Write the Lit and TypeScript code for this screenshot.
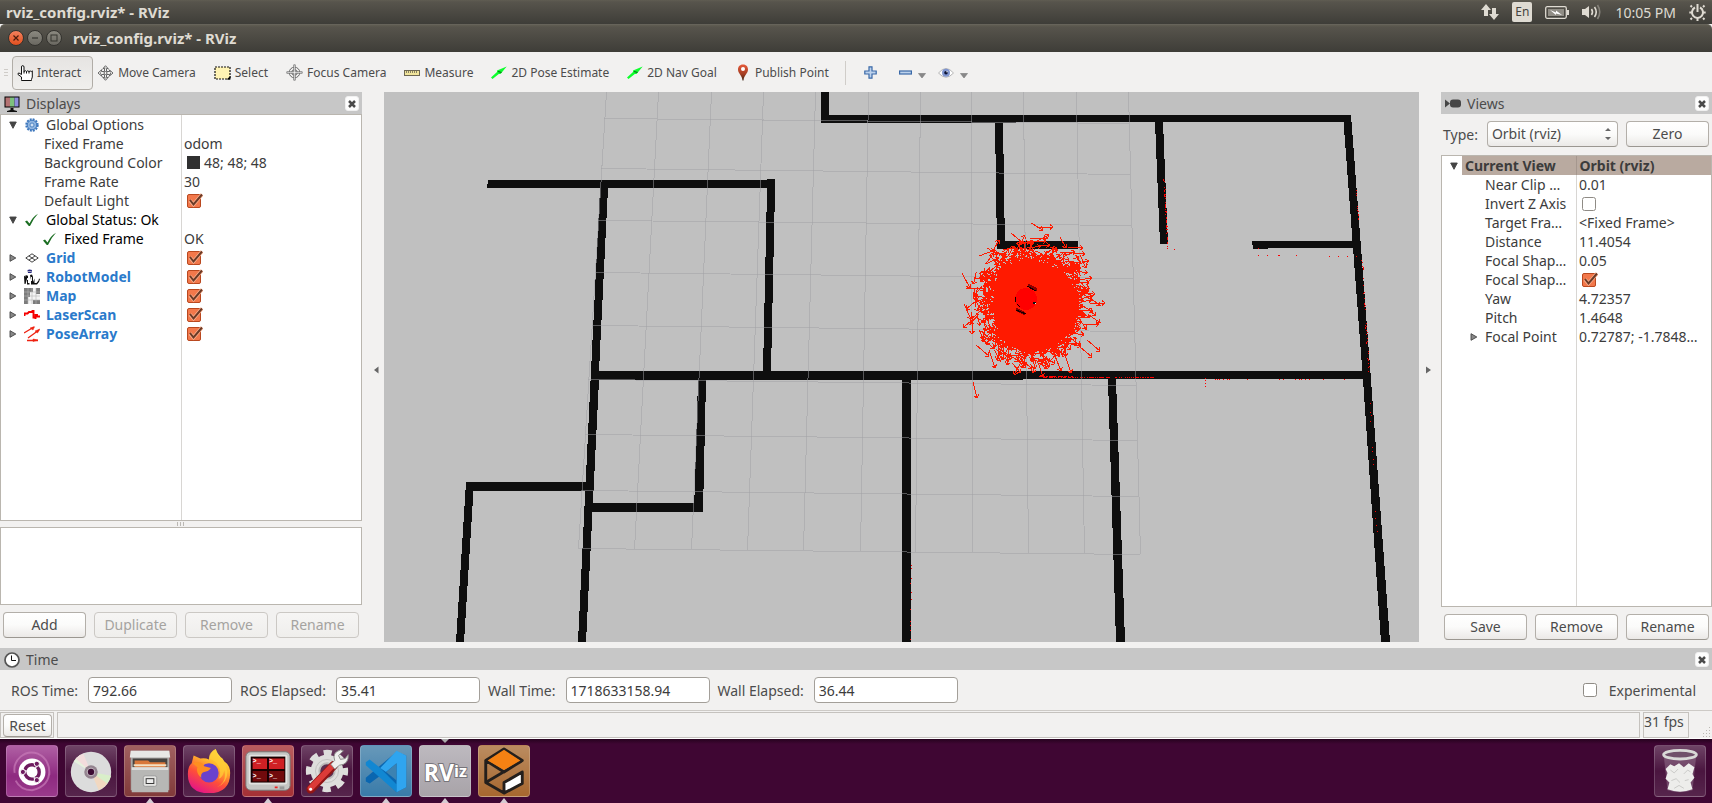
import { LitElement, html, svg, css, nothing } from "lit";
import { customElement, property } from "lit/decorators.js";

const FONT = css`"Noto Sans", "Open Sans", sans-serif`;

const controls = css`
  * { box-sizing: border-box; }
  svg { display: block; flex: none; }
  button, input, select { font: inherit; color: inherit; margin: 0; }
  .btn {
    height: 26px; padding: 0 6px; border: 1px solid #b3afa9; border-bottom-color: #9b9791;
    border-radius: 4px; background: linear-gradient(#ffffff, #fbfbfa 50%, #ebe9e7);
    font-size: 14px; line-height: 18px; color: #4c4c4c;
  }
  .btn:disabled { color: #a5a3a0; border-color: #cbc8c4; background: linear-gradient(#f6f5f4, #efeeec); }
  input[type="checkbox"] {
    appearance: none; display: block; width: 16px; height: 16px;
    background: no-repeat url("data:image/svg+xml,%3Csvg xmlns='http://www.w3.org/2000/svg' width='16' height='16'%3E%3Crect x='.5' y='1.5' width='13' height='13' rx='2' fill='white' stroke='%238f8b85'/%3E%3C/svg%3E");
  }
  input[type="checkbox"]:checked {
    background-image: url("data:image/svg+xml,%3Csvg xmlns='http://www.w3.org/2000/svg' width='16' height='16'%3E%3Crect x='.5' y='1.5' width='13' height='13' rx='1.5' fill='%23f2784b' stroke='%23b9481f'/%3E%3Cpath d='M3 7.5L6.5 11.500L15 1.500' fill='none' stroke='%23f9b08f' stroke-width='3.500'/%3E%3Cpath d='M3 7L6.500 11.500L15 1.500' fill='none' stroke='%236b3a26' stroke-width='2'/%3E%3C/svg%3E");
  }
`;

const icons: Record<string, unknown> = {
  interact: html`<svg width="16" height="16" viewBox="0 0 16 16"><path d="M4.500 14.500V12L1 9.500Q.5 8 2 8L4.500 9.500V2Q4.500.6 5.700.6T7 2V6.500Q8.300 4.800 9.500 6.500Q10.800 5 12 6.600Q13.300 5.400 14.300 6.600L15.300 5.800V12L14.500 14.500V15.500H4.500Z" fill="#fff" stroke="#111"/><path d="M9.500 6.500V8.500M12 6.500V8.500M7 6V8.500" stroke="#111"/></svg>`,
  move: html`<svg width="17" height="16" viewBox="0 0 17 16" fill="#f4f3f1" stroke="#666"><path d="M8.500.7L11 3.500H9.500V6.500H12.500V5L16 8L12.500 11V9.500H9.500V12.500H11L8.500 15.300L6 12.500H7.500V9.500H4.500V11L1 8L4.500 5V6.500H7.500V3.500H6Z"/><circle cx="8.500" cy="8" r="5" fill="none" stroke-dasharray="2 1.500"/><circle cx="8.500" cy="8" r="1.500"/></svg>`,
  select: html`<svg width="17" height="16" viewBox="0 0 17 16"><rect x="1" y="2" width="15" height="12" fill="#fff3b4" stroke="#111" stroke-width="1.200" stroke-dasharray="2 1"/><path d="M16.500 11V14.500H12.500Z" fill="#000"/></svg>`,
  focus: html`<svg width="17" height="17" viewBox="0 0 17 17" fill="none" stroke="#666"><circle cx="8.500" cy="8.500" r="5.300"/><circle cx="8.500" cy="8.500" r="2.800"/><path d="M7.700.8H9.300V7.700H16.200V9.300H9.300V16.200H7.700V9.300H.8V7.700H7.700Z" fill="#eee" stroke-width=".7"/></svg>`,
  measure: html`<svg width="16" height="16" viewBox="0 0 16 16"><rect x=".5" y="5.500" width="15" height="5" fill="#f0e49b" stroke="#6d6752"/><path d="M2.500 6V8M4.500 6V8M6.500 6V8M8.500 6V8M10.500 6V8M12.500 6V8" stroke="#6d6752" stroke-width=".8"/></svg>`,
  arrow: html`<svg width="16" height="16" viewBox="0 0 16 16"><path d="M0 12.500L6 7L6 5.500L15.700 1.500L9.500 9H7.800L1.500 14Z" fill="#0eff2e"/><path d="M7 6.500L10.500 7.500" stroke="#0a6618" stroke-width="1.300"/></svg>`,
  pin: html`<svg width="16" height="17" viewBox="0 0 16 17"><defs><linearGradient id="pg" x2="0" y2="1"><stop stop-color="#e65a3b"/><stop offset=".6" stop-color="#a43d22"/><stop offset="1" stop-color="#3d2312"/></linearGradient></defs><path d="M8 .5C4.500.5 3 3 3 5.500C3 9.500 7 11 7.500 16.500H8.500C9 11 13 9.500 13 5.500C13 3 11.500.5 8 .5Z" fill="url(#pg)"/><circle cx="8" cy="5" r="2" fill="#fff"/></svg>`,
  plus: html`<svg width="13" height="13" viewBox="0 0 13 13"><path d="M5 .8H8V5H12.200V8H8V12.200H5V8H.8V5H5Z" fill="#bdd2ec" stroke="#3a69a8" stroke-width="1.200"/></svg>`,
  minus: html`<svg width="13" height="13" viewBox="0 0 13 13"><rect x=".6" y="5" width="11.800" height="3" fill="#bdd2ec" stroke="#3a69a8" stroke-width="1.200"/></svg>`,
  eye: html`<svg width="16" height="12" viewBox="0 0 16 12"><path d="M.5 6Q8-3 15.500 6Q8 14.500.5 6Z" fill="#fff" stroke="#b5b5b5"/><circle cx="8" cy="5.800" r="4" fill="#7f95cf"/><circle cx="8" cy="5.800" r="1.800" fill="#0c1233"/><circle cx="9" cy="4.800" r=".7" fill="#fff"/></svg>`,
  caret: html`<svg width="8" height="13" viewBox="0 0 8 13"><path d="M.5 7.500H7.500L4 12Z" fill="#888" stroke="#777" stroke-width=".6"/></svg>`,
  monitor: html`<svg width="16" height="16" viewBox="0 0 16 16"><rect x=".5" y=".5" width="15" height="11" fill="#000"/><path d="M1.500 1.500H6V10.500H1.500Z" fill="#b47272"/><path d="M6 1.500H10.500V10.500H6Z" fill="#7dc07d"/><path d="M10.500 1.500H14.500V10.500H10.500Z" fill="#8d8ddb"/><path d="M6.500 12H9.500V14L13 15V16H3V15L6.500 14Z" fill="#111"/></svg>`,
  camera: html`<svg width="16" height="9" viewBox="0 0 16 9" fill="#454545"><path d="M0 .5L5 4.500L0 8.500Z"/><rect x="5" y=".5" width="11" height="8" rx="3"/></svg>`,
  clock: html`<svg width="16" height="16" viewBox="0 0 16 16"><circle cx="8" cy="8" r="7" fill="#fff" stroke="#555" stroke-width="1.700"/><path d="M7.500 3.500V8.500H12" fill="none" stroke="#111"/></svg>`,
  gear: html`<svg width="14" height="14" viewBox="0 0 14 14"><circle cx="7" cy="7" r="5.600" fill="none" stroke="#3d77bd" stroke-width="2.200" stroke-dasharray="1.900 1.030"/><circle cx="7" cy="7" r="4.800" fill="#8fb4df" stroke="#3d77bd"/><circle cx="7" cy="7" r="2" fill="#cfe0f3" stroke="#3d77bd" stroke-width=".8"/></svg>`,
  tick: html`<svg width="14" height="14" viewBox="0 0 14 14"><path d="M0 8.500L2 7.500L4.500 10.500Q7.500 4 13 .8Q8 6 5 13H3.800Z" fill="#1b6e22"/></svg>`,
  grid: html`<svg width="14" height="10" viewBox="0 0 14 10" fill="none" stroke="#444"><path d="M.8 5L7 .8L13.200 5L7 9.200ZM3.900 2.900L10.100 7.100M10.100 2.900L3.900 7.100"/></svg>`,
  robot: html`<svg width="16" height="16" viewBox="0 0 16 16" fill="#111"><path d="M3.500 1Q5.500 0 8 1L7.500 4H4Z" fill="#25257e"/><path d="M4 2H7.500V3H4Z" fill="#aab"/><path d="M0 7.500L1.500 6V8L2.500 6L4 7V14H5.500V15.500H3V10L1.500 15H.5Z"/><path d="M6 6L8 5.500L9 8V13L10.500 9.500V14H12.500L14.500 11.500L15 9.500L16 10L15 13L13 15.500H7V11Z"/><path d="M7.500 8V12M3.500 9V11" stroke="#eee"/></svg>`,
  map: html`<svg width="16" height="16" viewBox="0 0 16 16"><path d="M0 0H16V16H0Z" fill="#f4f4f4"/><path d="M0 0H9V4H6V9H4V16H0ZM12 0H16V6H12ZM9 12H16V16H9Z" fill="#7c7c7c"/><path d="M4 0V16M8 0V16M12 0V16M0 4H16M0 8H16M0 12H16" stroke="#b5b5b5" stroke-width=".6"/></svg>`,
  laser: html`<svg width="16" height="12" viewBox="0 0 16 12"><path d="M.5 7V4.500H3.500L5 3H8.500V2H9.500V8.500H11.500V10V6H13V7.500H16" fill="none" stroke="#f50000" stroke-width="1.900"/></svg>`,
  poses: html`<svg width="16" height="16" viewBox="0 0 16 16" stroke="#ee2211" fill="none"><path d="M0 7L10 1M4 12L15 4M3 14.500H14" stroke-width="1.300"/><path d="M6 2L10.500.7L9 4ZM11 5L16 3L13.500 7ZM9 13L14 14L9 15.500Z" fill="#ee2211" stroke-width=".5"/></svg>`,
};

const tri = (open: boolean) => html`<svg width="8" height="8" viewBox="0 0 8 8"><path d=${open ? "M.7 1H7.300L4 7.300Z" : "M1 .7V7.300L6.800 4Z"} fill=${open ? "#444" : "#888"} stroke="#444" stroke-width=".9"/></svg>`;

interface Row {
  name: string;
  value?: string;
  level?: number;
  icon?: string;
  open?: boolean;
  check?: boolean;
  tone?: string;
  swatch?: boolean;
}

@customElement("property-tree")
class PropertyTree extends LitElement {
  @property({ attribute: false }) rows: Row[] = [];
  @property() label = "";

  static styles = [controls, css`
    :host { display: block; border: 1px solid #bab6af; overflow: hidden; font: 14px/19px ${FONT}; color: #3c3c3c;
      background: linear-gradient(#d8d6d3, #d8d6d3) var(--split) 0 / 1px 100% no-repeat #fff; }
    table { width: 100%; table-layout: fixed; border-collapse: collapse; }
    col.name { width: var(--split); }
    th, td { height: 19px; padding: 0; font-weight: 400; text-align: left; }
    .cell { display: flex; align-items: center; height: 19px; white-space: nowrap; }
    .text { padding-left: 1px; }
    .toggle { width: 24px; padding-left: 8px; flex: none; }
    .glyph { width: 20px; margin: 0 3px 0 -3px; flex: none; display: flex; align-items: center; justify-content: center; }
    .l1 { padding-left: 18px; }
    .value { padding-left: 3px; }
    .value input { margin-left: 3px; }
    .swatch { width: 13px; height: 13px; margin: 0 4px 0 3px; background: #303030; }
    .black { color: #000; }
    .link { color: #2a7acb; font-weight: 700; }
    .current, .current + td { font-weight: 700; }
    .current .text { background: #b9aaa0; flex: 1; padding-left: 3px; }
    .current .toggle { width: 20px; }
    .current + td { background: #b9aaa0; border-left: 1px solid #a5978e; }
    .view.l1 { padding-left: 20px; }
    .view.l1 .toggle { width: 22px; }
  `];

  render() {
    return html`<table aria-label=${this.label}>
      <colgroup><col class="name"><col></colgroup>
      <tbody>${this.rows.map((r, i) => html`<tr>
        <th scope="row" class=${r.tone ?? ""}>
          <div class="cell l${r.level ?? 0} ${this.label === "View properties" ? "view" : ""}">
            <span class="toggle">${r.open === undefined ? nothing : tri(r.open)}</span>
            ${r.icon ? html`<span class="glyph">${icons[r.icon]}</span>` : nothing}
            <span class="text" id="p${i}">${r.name}</span>
          </div>
        </th>
        <td><div class="cell value">
          ${r.check === undefined ? nothing : html`<input type="checkbox" aria-labelledby="p${i}" .checked=${r.check}>`}
          ${r.swatch ? html`<span class="swatch"></span>` : nothing}
          ${r.value ? html`<span>${r.value}</span>` : nothing}
        </div></td>
      </tr>`)}</tbody>
    </table>`;
  }
}

@customElement("dock-title")
class DockTitle extends LitElement {
  @property() icon = "";
  @property() label = "";
  static styles = [controls, css`
    :host { display: flex; align-items: center; gap: 6px; height: 22px; flex: none; padding: 1px 3px 0 4px; background: #c7c7c7; font: 14px/21px ${FONT}; color: #4c4c4c; }
    h2 { margin: 0; font: inherit; flex: 1; }
    button { width: 14px; height: 15px; padding: 0; border: 1px solid #f0f0f0; border-radius: 3px; background: #fdfdfd; display: grid; place-items: center; }
  `];
  render() {
    return html`${icons[this.icon]}<h2>${this.label}</h2>
      <button aria-label="Close ${this.label}"><svg width="8" height="8" viewBox="0 0 8 8"><path d="M1 1L7 7M7 1L1 7" stroke="#4a4a4a" stroke-width="2.500"/></svg></button>`;
  }
}

const WALLS = [
  "488,180 775,180 775,188 487,188", "767,179 775,179 775,194 767,194",
  "600,188 608,188 599,371 599,380 586,642 578,642 591,371",
  "767,190 775,190 771,371 763,371",
  "591,371 1023,371 1363,371 1363,379 1023,379 1023,380 591,380",
  "698,380 706,380 703,512 694,512", "590,503 703,503 703,512 590,512",
  "466,482 593,482 593,491 466,491", "466,482 474,482 464,642 456,642",
  "902,380 911,380 911,642 902,642", "821,92 829,92 829,122 821,122",
  "821,115 1351,115 1351,122 1016,122 1016,123 821,123",
  "995,122 1003,122 1005,249 997,249", "997,241 1078,241 1078,249 997,249",
  "1155,122 1163,122 1168,244 1160,244",
  "1252,241 1356,241 1356,248 1268,248 1268,249 1253,249",
  "1343,115 1351,115 1371,380 1390,642 1381,642 1363,380",
  "1108,379 1116,379 1125,642 1116,642",
];

const GRID = [
  [606, 92, 578, 548], [658, 92, 634, 549], [711, 92, 691, 549], [763, 92, 747, 550],
  [815, 92, 803, 550], [868, 92, 860, 551], [920, 92, 915, 552], [971, 92, 972, 552],
  [1023, 92, 1028, 553], [1076, 92, 1084, 553], [1128, 92, 1140, 554],
  [604, 118, 1129, 123], [601, 168, 1130, 174], [598, 220, 1131, 225], [595, 272, 1133, 278],
  [592, 325, 1134, 331], [588, 379, 1136, 385], [585, 434, 1137, 440], [581, 490, 1138, 496],
  [578, 548, 1140, 554],
];

const STRAYS = [
  [962, 273, 970, 288], [966, 288, 986, 288], [964, 304, 971, 319], [972, 316, 972, 334],
  [976, 345, 989, 356], [989, 350, 995, 368], [1012, 363, 1021, 373], [1055, 356, 1061, 371],
  [1065, 355, 1071, 373], [973, 382, 977, 398], [1073, 259, 1079, 257], [1080, 255, 1086, 268],
  [1031, 223, 1043, 230], [1037, 227, 1053, 227], [1090, 303, 1105, 303], [1087, 340, 1100, 351],
  [1080, 347, 1092, 357], [1060, 252, 1085, 254], [1011, 233, 1023, 243], [979, 256, 995, 250],
  [1083, 325, 1099, 324], [1078, 280, 1092, 278], [1030, 238, 1047, 238], [1060, 237, 1066, 248],
  [1068, 247, 1083, 248], [1088, 309, 1096, 316], [987, 248, 997, 254], [1020, 243, 1046, 241],
];

function seeded(seed: number) {
  return () => {
    seed = (seed * 1664525 + 1013904223) % 4294967296;
    return seed / 4294967296;
  };
}

function arrow(x: number, y: number, a: number, len: number) {
  const tx = x + Math.cos(a) * len, ty = y + Math.sin(a) * len;
  const head = (d: number) => `M${tx.toFixed(1)} ${ty.toFixed(1)}L${(tx - Math.cos(a + d) * 4).toFixed(1)} ${(ty - Math.sin(a + d) * 4).toFixed(1)}`;
  return `M${x.toFixed(1)} ${y.toFixed(1)}L${tx.toFixed(1)} ${ty.toFixed(1)}${head(0.7)}${head(-0.7)}`;
}

function poseCloud() {
  const rnd = seeded(42);
  let d = "";
  for (let i = 0; i < 950; i++) {
    const t = rnd() * Math.PI * 2;
    const spread = (rnd() + rnd() + rnd() - 1.5) * 19;
    const r = 38 + spread;
    const a = 0.5 + (rnd() + rnd() - 1) * 2.4;
    d += arrow(1028 + Math.cos(t) * r, 302 + Math.sin(t) * r * 1.070, a, 13);
  }
  for (const [x1, y1, x2, y2] of STRAYS) d += arrow(x1, y1, Math.atan2(y2 - y1, x2 - x1), Math.hypot(x2 - x1, y2 - y1));
  return d;
}

function laserDots() {
  const rnd = seeded(7);
  let d = "";
  const dot = (x: number, y: number) => { d += `M${Math.round(x)} ${Math.round(y)}h1v1h-1z`; };
  const run = (x1: number, y1: number, x2: number, y2: number, n: number) => {
    for (let i = 0; i < n; i++) { const k = rnd(); dot(x1 + (x2 - x1) * k + rnd(), y1 + (y2 - y1) * k); }
  };
  run(1036, 376, 1072, 376, 50);
  run(1042, 377, 1155, 377, 95);
  run(1163, 178, 1167, 248, 48);
  run(1355, 186, 1358, 220, 14);
  run(1361, 256, 1368, 372, 42);
  run(1369, 400, 1377, 560, 12);
  for (const y of [565, 568, 578, 583, 592, 599, 609, 621, 625, 630, 639]) dot(y < 600 && y !== 583 ? 911 : 910, y);
  for (const x of [1258, 1267, 1278, 1279, 1296]) dot(x, 255);
  for (const x of [1329, 1338, 1347, 1356]) dot(x, 256);
  for (const x of [1215, 1217, 1219, 1223, 1227, 1229, 1247, 1279, 1283, 1295, 1299, 1301, 1305, 1309, 1323, 1344]) dot(x, 379);
  for (const y of [378, 380, 383, 386]) dot(1205, y);
  dot(1174, 249); dot(1258, 248);
  return d;
}

@customElement("map-view")
class MapView extends LitElement {
  static styles = css`
    :host { display: flex; min-width: 0; background: #c0c0c0; overflow: hidden; }
    svg { display: block; flex: 1; width: 100%; min-width: 0; height: 100%; }
    .wall { fill: #0e0e0e; }
    .line { stroke: #a0a0a4; stroke-opacity: .5; }
    .pose { stroke: #ff1a00; fill: none; }
    .laser { fill: #ff0000; }
  `;
  render() {
    return html`<svg viewBox="384 92 1035 550" preserveAspectRatio="xMidYMid slice" shape-rendering="crispEdges" role="img" aria-label="Map">
      ${WALLS.map((p) => svg`<polygon class="wall" points=${p}/>`)}
      ${GRID.map(([a, b, c, d]) => svg`<line class="line" x1=${a + 0.5} y1=${b + 0.5} x2=${c + 0.5} y2=${d + 0.5}/>`)}
      <path d="M1000 268L1013 264L1030 260L1048 264L1062 273L1071 282L1078 294L1079 308L1074 325L1066 336L1055 345L1040 351L1020 351L1007 343L998 330L993 310L994 287Z" fill="#ff1a00"/>
      <path class="pose" d=${poseCloud()}/>
      <path class="laser" d=${laserDots()}/>
      <circle cx="1026" cy="299" r="11" fill="#ff0000"/>
      <path d="M1028 285L1037 290M1016 309L1025 314" stroke="#8a0000" stroke-width="3"/>
      <path d="M1027 286L1036 291M1016 310L1026 314M1015 297V302M1017 304L1020 307" stroke="#140000" fill="none"/>
      <path d="M1033 302h3v2h-3z" fill="#111"/><path d="M1035 303h1v1h-1z" fill="#eee"/>
    </svg>`;
  }
}

const DISPLAYS: Row[] = [
  { name: "Global Options", icon: "gear", open: true },
  { name: "Fixed Frame", value: "odom", level: 1 },
  { name: "Background Color", value: "48; 48; 48", level: 1, swatch: true },
  { name: "Frame Rate", value: "30", level: 1 },
  { name: "Default Light", check: true, level: 1 },
  { name: "Global Status: Ok", icon: "tick", open: true, tone: "black" },
  { name: "Fixed Frame", icon: "tick", value: "OK", level: 1, tone: "black" },
  { name: "Grid", icon: "grid", open: false, check: true, tone: "link" },
  { name: "RobotModel", icon: "robot", open: false, check: true, tone: "link" },
  { name: "Map", icon: "map", open: false, check: true, tone: "link" },
  { name: "LaserScan", icon: "laser", open: false, check: true, tone: "link" },
  { name: "PoseArray", icon: "poses", open: false, check: true, tone: "link" },
];

const VIEW: Row[] = [
  { name: "Current View", value: "Orbit (rviz)", open: true, tone: "current" },
  { name: "Near Clip …", value: "0.01", level: 1 },
  { name: "Invert Z Axis", check: false, level: 1 },
  { name: "Target Fra…", value: "<Fixed Frame>", level: 1 },
  { name: "Distance", value: "11.4054", level: 1 },
  { name: "Focal Shap…", value: "0.05", level: 1 },
  { name: "Focal Shap…", check: true, level: 1 },
  { name: "Yaw", value: "4.72357", level: 1 },
  { name: "Pitch", value: "1.4648", level: 1 },
  { name: "Focal Point", value: "0.72787; -1.7848…", level: 1, open: false },
];

const TOOLS = [
  ["interact", "Interact"], ["move", "Move Camera"], ["select", "Select"], ["focus", "Focus Camera"],
  ["measure", "Measure"], ["arrow", "2D Pose Estimate"], ["arrow", "2D Nav Goal"], ["pin", "Publish Point"],
];

const TIMES = [["ROS Time:", "792.66"], ["ROS Elapsed:", "35.41"], ["Wall Time:", "1718633158.94"], ["Wall Elapsed:", "36.44"]];

const prompt = (x: number, y: number) => svg`<text x=${x} y=${y} font-size="7" font-family="Liberation Mono" font-weight="700" fill="#fff">&gt;_</text>`;

const LAUNCHERS = [
  { name: "Dash", tone: "dash", art: html`<svg viewBox="0 0 52 52"><path d="M8 28a18 18 0 0 1 24-20q13 6 12 22M44 26q0 16-18 20q-12 0-17-10" fill="none" stroke="#c77ab8" stroke-width="2" opacity=".7"/><circle cx="26" cy="27" r="14" fill="#fff"/><circle cx="26" cy="27" r="7.500" fill="none" stroke="#6e1b5f" stroke-width="3.500" stroke-dasharray="14.200 1.500" stroke-dashoffset="6"/><g fill="#6e1b5f" stroke="#fff"><circle cx="16.500" cy="27" r="2.700"/><circle cx="31" cy="18.500" r="2.700"/><circle cx="31" cy="35.500" r="2.700"/></g></svg>` },
  { name: "Disc", tone: "clear", art: html`<svg viewBox="0 0 52 52"><circle cx="26" cy="27" r="21" fill="#dcdcdc"/><path d="M26 27L8 16A21 21 0 0 1 15 9Z" fill="#e5f1dd"/><path d="M26 27L10 13A21 21 0 0 1 18 8Z" fill="#f3dcdc"/><path d="M26 27L47 31A21 21 0 0 1 42 40Z" fill="#d9efc9"/><path d="M26 27L43 39A21 21 0 0 1 34 46Z" fill="#f1d8c1"/><circle cx="26" cy="27" r="7" fill="#94848f"/><circle cx="26" cy="27" r="4" fill="#3c0c32" stroke="#cfc6cc"/></svg>` },
  { name: "Files", tone: "files", run: true, art: html`<svg viewBox="0 0 52 52"><path d="M6 5H46V46H6Z" fill="#aaa9a7"/><path d="M6 5H46L47 12H5Z" fill="#e8e8e6"/><path d="M8 13H44V23H8Z" fill="#474340"/><path d="M10 15H24L26 17H42V23H10Z" fill="#d9773a"/><path d="M9 19H43V21H9Z" fill="#f4e0c3"/><path d="M7 22H45V48H7Z" fill="#b7b7b5"/><path d="M7 22H45V25H7Z" fill="#ddd"/><rect x="19" y="31" width="14" height="11" rx="2" fill="#e3e3e1" stroke="#999"/><rect x="22" y="34" width="8" height="5" fill="#eee" stroke="#333"/></svg>` },
  { name: "Firefox", tone: "clear", art: html`<svg viewBox="0 0 52 52"><defs><linearGradient id="ff" x1=".8" y1="0" x2=".3" y2="1"><stop stop-color="#fff04d"/><stop offset=".35" stop-color="#ffb52b"/><stop offset=".65" stop-color="#ff5038"/><stop offset="1" stop-color="#e31587"/></linearGradient></defs><path d="M10 10L17 13Q22 12 26 14Q27 6 33 3Q35 9 40 13L42 16Q48 20 48 28Q48 49 26 49Q4 49 4 29Q4 21 8 18Z" fill="url(#ff)"/><circle cx="26" cy="28" r="10" fill="#6a42cc"/><path d="M9 18Q18 14 21 21L28 23Q25 27 21 27Q17 28 18 33Q12 28 14 22Z" fill="#ff8f20"/><path d="M26 14Q29 13 34 18Q40 26 36 34Q40 34 42 25Q45 38 34 43Q46 38 45 26Q43 15 35 10L33 3Q25 7 26 14Z" fill="#ffce37" opacity=".75"/></svg>` },
  { name: "Terminator", tone: "term", run: true, art: html`<svg viewBox="0 0 52 52"><rect x="3" y="6" width="46" height="40" rx="5" fill="#c5c5c3" stroke="#777"/><rect x="6" y="9" width="40" height="31" rx="2" fill="#e3e3e1"/><rect x="8" y="11" width="36" height="27" fill="#180000"/><path d="M10 13H25V24H10ZM27 13H43V24H27Z" fill="#cf2024"/><path d="M10 26H25V37H10ZM27 26H43V37H27Z" fill="#710a0c"/>${prompt(10, 18)}${prompt(27, 18)}${prompt(10, 33)}${prompt(27, 33)}<path d="M33 42h3v2h-3z" fill="#e22"/><rect x="38" y="42" width="5" height="3" fill="#999"/></svg>` },
  { name: "Settings", tone: "clear", art: html`<svg viewBox="0 0 52 52"><circle cx="26" cy="26" r="18.500" fill="none" stroke="#dededc" stroke-width="7" stroke-dasharray="8.200 6.330" stroke-dashoffset="4"/><circle cx="26" cy="26" r="17" fill="#dededc"/><circle cx="26" cy="26" r="12" fill="none" stroke="#c2c2c0"/><circle cx="26" cy="26" r="8" fill="#5b2f50" stroke="#bcbcba" stroke-width="2"/><path d="M9 45L33 20" stroke="#8f1515" stroke-width="9" stroke-linecap="round"/><path d="M9 44L32 20" stroke="#dc3b38" stroke-width="6" stroke-linecap="round"/><path d="M30 19L34 15Q31 7 40 4L43 5L38 10L40 14L45 13L48 9Q49 19 39 20L34 24Z" fill="#efefed" stroke="#8c8c8a"/><circle cx="9" cy="45" r="1.500" fill="#fff"/></svg>` },
  { name: "Visual Studio Code", tone: "code", run: true, art: html`<svg viewBox="0 0 52 52"><path d="M37 6L47 10V43L37 48L20 31L9 39L5 37V33L37 6Z" fill="#0a66b0"/><path d="M5 17L9 14L20 23L37 40V48L5 20Z" fill="#1187d2"/><path d="M37 5L47 10V43L37 48V35V18L26 27L20 23Z" fill="#2fa5ef"/><path d="M37 18V36L26 27Z" fill="#3c82b1"/></svg>` },
  { name: "RViz", tone: "rviz", run: true, active: true, art: html`<svg viewBox="0 0 52 52"><text x="4" y="36" font-family="Open Sans, sans-serif" font-weight="700" fill="#fff" stroke="#77747a" stroke-width="2" paint-order="stroke" font-size="24">RV<tspan font-size="17" dy="-4">iz</tspan></text></svg>` },
  { name: "Gazebo", tone: "gazebo", run: true, art: html`<svg viewBox="0 0 52 52"><path d="M26 39L45 28V39L26 49Z" fill="#fff"/><path d="M26 3L45 15L26 27L7 15ZM7 15V38L26 49L45 39V27L26 38V49M7 38L44 16M7 15L26 27" fill="none" stroke="#241f1c" stroke-width="3" stroke-linejoin="round"/><path d="M26 4L43 15L26 25L9 15Z" fill="#f58113"/></svg>` },
];

const TRASH = html`<svg viewBox="0 0 52 52"><path d="M9 9L13 46Q26 50 39 46L43 9Z" fill="#a68a9f" opacity=".4"/><path d="M11 24L16 19L20 21L25 18L30 22L35 18L41 22L39 29L41 33L37 38L39 45Q26 50 13 45L15 38L11 34L13 28Z" fill="#ededeb"/><path d="M16 25L20 28L24 24M30 29L34 25L37 27M17 36L22 34L26 38M31 36L35 35M20 44L25 41L30 44" fill="none" stroke="#c9c9c7"/><ellipse cx="26" cy="9" rx="17" ry="4.500" fill="#70506a" stroke="#d9d9d7" stroke-width="3"/></svg>`;

@customElement("app-root")
class AppRoot extends LitElement {
  static styles = [controls, css`
    :host { display: flex; flex-direction: column; min-height: 100vh; background: #f2f1f0; color: #4c4c4c; font: 14px/19px ${FONT}; }
    .panel, .title { display: flex; align-items: center; background: linear-gradient(#605d52, #57544c 2px, #3e3d38); color: #dfdbd2; flex: none; }
    .panel { height: 24px; padding: 0 6px; }
    .panel strong { flex: 1; font-size: 15px; line-height: 20px; }
    .tray { display: flex; align-items: center; gap: 13px; }
    .lang { width: 20px; height: 20px; border-radius: 2px; background: #dfdbd2; color: #46443f; font-size: 12px; line-height: 20px; text-align: center; }
    .title { height: 28px; padding: 0 8px 2px; gap: 3px; border-radius: 5px 5px 0 0; border-top: 1px solid #66635a; }
    .title h1 { margin: 0 0 0 8px; font-size: 15px; line-height: 20px; font-weight: 700; }
    .win { width: 16px; height: 16px; padding: 0; border: 1px solid #34332f; border-radius: 50%; background: linear-gradient(#8b8980, #6a6861); display: grid; place-items: center; }
    .win.close { background: linear-gradient(#f3815d, #e2501f); }
    .toolbar { display: flex; align-items: center; height: 40px; padding: 1px 4px 0; font-size: 12px; line-height: 16px; color: #4c4c4c; flex: none; }
    .grip { width: 4px; height: 8px; margin-right: 4px; background: repeating-linear-gradient(#cfccc8 0 1px, transparent 1px 3px); }
    .tool { display: flex; align-items: center; gap: 4px; height: 34px; padding: 0 14px 0 4px; border: 0; border-radius: 4px; background: none; color: #4c4c4c; }
    .tool.on { padding: 0 11px 0 4px; border: 1px solid #b1ada7; background: linear-gradient(#e6e4e2, #f0efed); }
    .sep { width: 1px; height: 24px; margin: 0 12px 0 2px; background: #d0cdc9; }
    .mini { display: flex; align-items: center; gap: 6px; border: 0; background: none; padding: 0 6px; height: 26px; }
    .plus { padding-right: 16px; }
    .main { display: flex; flex: 1; min-height: 0; }
    .left, .right { display: flex; flex-direction: column; flex: none; }
    .left { width: 362px; }
    .right { width: 271px; }
    .left property-tree { flex: 1; --split: 180px; }
    .right property-tree { flex: 1; --split: 134px; }
    .split { display: grid; place-items: center; height: 6px; }
    .split i { width: 8px; height: 4px; background: repeating-linear-gradient(90deg, #bbb8b3 0 1px, transparent 1px 3px); }
    .about { height: 78px; background: #fff; border: 1px solid #bab6af; }
    .row { display: grid; grid-auto-flow: column; grid-auto-columns: 1fr; gap: 8px; padding: 7px 3px 10px; }
    .right .row { padding: 7px 3px 8px; }
    .handle { width: 22px; flex: none; display: grid; place-items: center; padding: 0; border: 0; background: none; }
    map-view { flex: 1; margin-bottom: 6px; }
    .type { display: flex; align-items: center; gap: 8px; padding: 7px 3px 8px 2px; }
    .type label { margin-right: 1px; }
    .type select { flex: 1; min-width: 0; appearance: none; padding: 0 4px;
      background: no-repeat right 5px center url("data:image/svg+xml,%3Csvg xmlns='http://www.w3.org/2000/svg' width='8' height='14'%3E%3Cpath d='M1 4H7L4 1ZM1 10H7L4 13Z' fill='%23666'/%3E%3C/svg%3E"), linear-gradient(#ffffff, #fbfbfa 50%, #ebe9e7); }
    .type button { width: 83px; }
    .times { display: flex; align-items: center; gap: 10px; height: 41px; padding: 0 16px 0 11px; border-bottom: 1px solid #cdcac6; }
    .field { display: flex; align-items: center; gap: 10px; }
    .field + .field { margin-left: -2px; }
    .field input { width: 144px; height: 26px; padding: 0 4px; border: 1px solid #a39f99; border-radius: 4px; background: #fff; color: #3c3c3c; }
    .exp { display: flex; align-items: center; gap: 10px; margin-left: auto; }
    .status { display: flex; gap: 3px; height: 28px; padding-top: 1px; border-bottom: 1px solid #fff; }
    .status > div { border: 1px solid #c5c2be; }
    .reset { padding: 1px 1px 0 2px; }
    .reset .btn { width: 49px; height: 23px; padding: 0; }
    .message { flex: 1; }
    .fps { width: 46px; white-space: nowrap; line-height: 18px; }
    .size { width: 20px; padding: 15px 0 0 9px; }
    .launcher { display: flex; gap: 7px; height: 64px; padding: 0 6px; background: linear-gradient(#26031e, #3f0633 5px); flex: none; }
    .slot { display: flex; flex-direction: column; align-items: center; justify-content: flex-end; gap: 1px; }
    .slot:last-child { margin-left: auto; }
    .tile { width: 52px; height: 52px; padding: 0; border: 1px solid #ffffff30; border-radius: 4px; background: linear-gradient(#ffffff40, #ffffff10 50%, #ffffff20); overflow: hidden; }
    .tile svg { width: 50px; height: 50px; }
    .dash { background: linear-gradient(#b060a4, #8e2a80 60%, #9b3a8c); }
    .files { background: linear-gradient(#a06060, #813a3a); }
    .term { background: linear-gradient(#b85c5f, #a53035); }
    .code { background: linear-gradient(#6798b9, #397ba9); }
    .rviz { background: linear-gradient(#bdb9bf, #a8a3a8); }
    .gazebo { background: linear-gradient(#bb8c60, #a7672f); }
    .mark { height: 5px; width: 8px; }
    .mark.run { background: #d5ccd3; clip-path: polygon(50% 0, 100% 100%, 0 100%); }
    .front { width: 8px; height: 4px; margin-bottom: 1px; background: #aaa; clip-path: polygon(0 0, 100% 0, 50% 100%); }
  `];

  render() {
    return html`
      <header class="panel">
        <strong>rviz_config.rviz* - RViz</strong>
        <div class="tray">
          <svg width="18" height="16" viewBox="0 0 18 16" fill="#dfdbd2"><path d="M5 0L10 6H7V12H3V6H0ZM13 16L8 10H11V4H15V10H18Z"/></svg>
          <span class="lang">En</span>
          <svg width="24" height="13" viewBox="0 0 24 13"><rect x=".7" y=".7" width="20.600" height="11.600" rx="1.500" fill="none" stroke="#dfdbd2" stroke-width="1.300"/><rect x="3" y="3" width="16" height="7" fill="#908d85"/><path d="M22 4H24V9H22Z" fill="#dfdbd2"/><path d="M5 4L11 6.500V4.500L17 9L11 7.500V9Z" fill="#fff"/></svg>
          <svg width="20" height="16" viewBox="0 0 20 16"><path d="M0 5H3L7 2V14L3 11H0Z" fill="#dfdbd2"/><path d="M9.500 5Q11.500 8 9.500 11M12.500 3Q16 8 12.500 13" fill="none" stroke="#dfdbd2" stroke-width="1.600"/><path d="M15.500 1Q20 8 15.500 15" fill="none" stroke="#85827a" stroke-width="1.600"/></svg>
          <time>10:05 PM</time>
          <svg width="17" height="17" viewBox="0 0 17 17" fill="none" stroke="#dfdbd2" stroke-width="2"><path d="M6 3.500A5.500 5.500 0 1 0 11 3.500M8.500 0V8M3 3L1.500 1.500M14 3L15.500 1.500M.3 8.500H3M14 8.500H16.700M3 14L1.500 15.500M14 14L15.500 15.500M8.500 14V17"/></svg>
        </div>
      </header>
      <div class="title">
        <button class="win close" aria-label="Close"><svg width="8" height="8" viewBox="0 0 8 8"><path d="M1.500 1.500L6.500 6.500M6.500 1.500L1.500 6.500" stroke="#4a1c0d" stroke-width="1.200"/></svg></button>
        <button class="win" aria-label="Minimize"><svg width="8" height="8" viewBox="0 0 8 8"><path d="M1 4H7" stroke="#35342f" stroke-width="1.200"/></svg></button>
        <button class="win" aria-label="Maximize"><svg width="8" height="8" viewBox="0 0 8 8"><rect x="1" y="1" width="6" height="6" fill="none" stroke="#35342f"/></svg></button>
        <h1>rviz_config.rviz* - RViz</h1>
      </div>
      <nav class="toolbar" aria-label="Tools">
        <span class="grip"></span>
        ${TOOLS.map(([i, t], n) => html`<button class="tool ${n === 0 ? "on" : ""}">${icons[i]}<span>${t}</span></button>`)}
        <span class="sep"></span>
        <button class="mini plus" aria-label="Add tool">${icons.plus}</button>
        <button class="mini" aria-label="Remove tool">${icons.minus}${icons.caret}</button>
        <button class="mini" aria-label="Visibility">${icons.eye}${icons.caret}</button>
      </nav>
      <main class="main">
        <section class="left">
          <dock-title icon="monitor" label="Displays"></dock-title>
          <property-tree label="Displays" .rows=${DISPLAYS}></property-tree>
          <div class="split"><i></i></div>
          <div class="about"></div>
          <div class="row">
            <button class="btn">Add</button><button class="btn" disabled>Duplicate</button>
            <button class="btn" disabled>Remove</button><button class="btn" disabled>Rename</button>
          </div>
        </section>
        <button class="handle" aria-label="Collapse left panel"><svg width="14" height="8" viewBox="0 0 14 8"><path d="M12.500 .5V7.500L8 4Z" fill="#666"/></svg></button>
        <map-view></map-view>
        <button class="handle" aria-label="Collapse right panel"><svg width="8" height="8" viewBox="0 0 8 8"><path d="M0 .5V7.500L5 4Z" fill="#666"/></svg></button>
        <section class="right">
          <dock-title icon="camera" label="Views"></dock-title>
          <div class="type">
            <label for="type">Type:</label>
            <select class="btn" id="type"><option>Orbit (rviz)</option></select>
            <button class="btn">Zero</button>
          </div>
          <property-tree label="View properties" .rows=${VIEW}></property-tree>
          <div class="row"><button class="btn">Save</button><button class="btn">Remove</button><button class="btn">Rename</button></div>
        </section>
      </main>
      <section>
        <dock-title icon="clock" label="Time"></dock-title>
        <div class="times">
          ${TIMES.map(([l, v], i) => html`<div class="field"><label for="t${i}">${l}</label><input type="text" id="t${i}" .value=${v}></div>`)}
          <label class="exp"><input type="checkbox">Experimental</label>
        </div>
      </section>
      <footer class="status">
        <div class="reset"><button class="btn">Reset</button></div>
        <div class="message"></div>
        <div class="fps">31 fps</div>
        <span class="size"><svg width="10" height="10" viewBox="0 0 10 10" fill="#bbb8b3"><path d="M8 0h1v1H8zM5 3h1v1H5zM8 3h1v1H8zM2 6h1v1H2zM5 6h1v1H5zM8 6h1v1H8zM2 9h1v1H2zM5 9h1v1H5zM8 9h1v1H8z"/></svg></span>
      </footer>
      <nav class="launcher" aria-label="Launcher">
        ${LAUNCHERS.map((l) => html`<div class="slot">${l.active ? html`<i class="front"></i>` : nothing}<button class="tile ${l.tone}" aria-label=${l.name}>${l.art}</button><i class="mark ${l.run ? "run" : ""}"></i></div>`)}
        <div class="slot"><button class="tile clear" aria-label="Trash">${TRASH}</button><i class="mark"></i></div>
      </nav>
    `;
  }
}
